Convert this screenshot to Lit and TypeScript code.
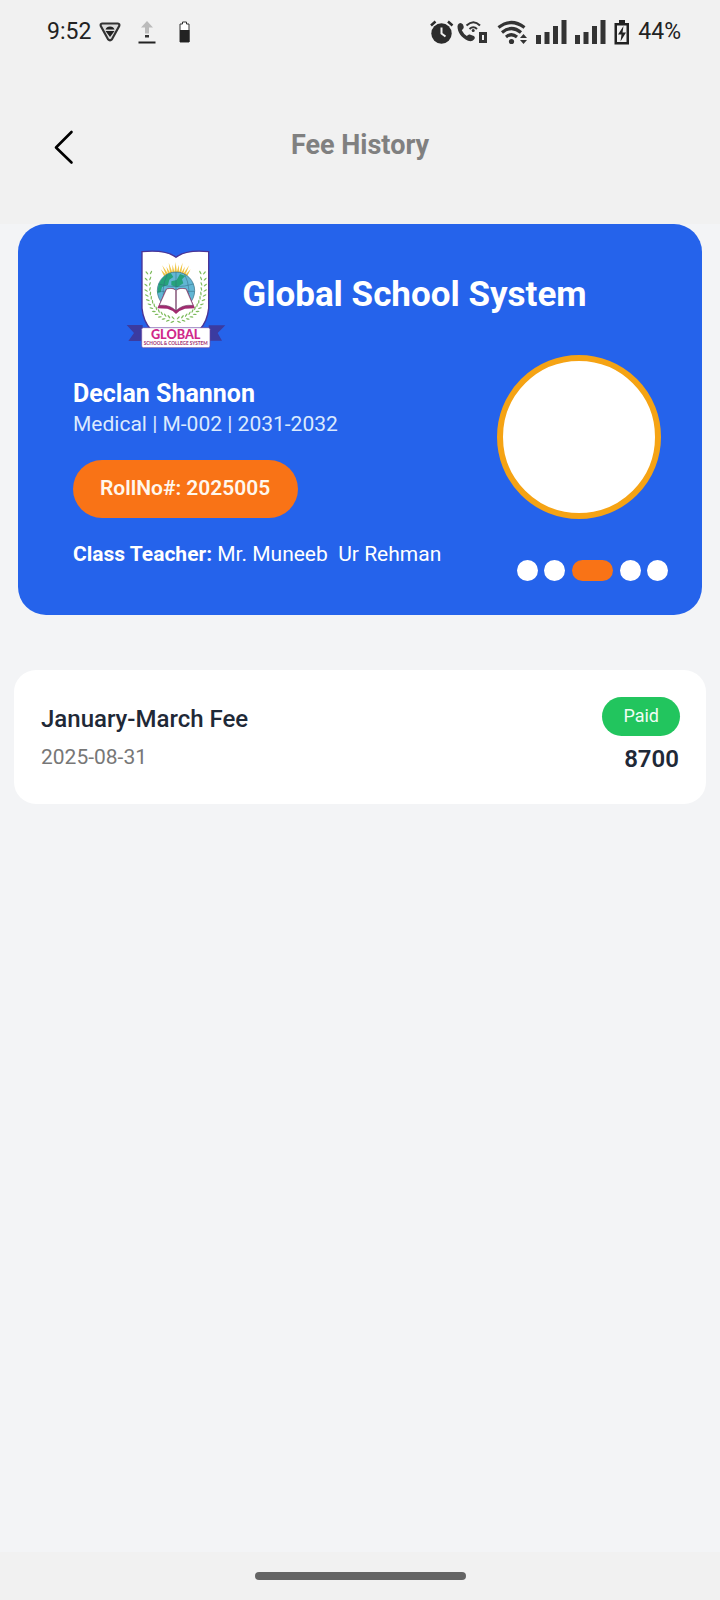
import { LitElement, html, svg, css } from "lit";
import { customElement, property, state } from "lit/decorators.js";
import { classMap } from "lit/directives/class-map.js";

interface Fee {
    title: string;
    date: string;
    amount: number;
    status: string;
}

@customElement("status-bar")
class StatusBar extends LitElement {
    @property() time = "";
    @property() battery = "";

    static styles = css`
        :host {
            display: flex;
            justify-content: space-between;
            align-items: center;
            height: 64px;
            padding: 0 39px 0 47px;
            color: #222;
            font-size: 23px;
            line-height: 28px;
        }

        .side {
            display: flex;
            align-items: center;
            gap: 8px;
        }

        .left {
            gap: 17px;
        }

        .clock {
            display: flex;
            align-items: center;
            gap: 8px;
        }

        .pair {
            display: flex;
            gap: 3px;
        }

        svg {
            display: block;
        }
    `;

    _signal() {
        return html`
            <svg width="31" height="24" viewBox="0 0 31 24" fill="#333">
                <rect x="0" y="15" width="5" height="9" />
                <rect x="8.5" y="12" width="5" height="12" />
                <rect x="17" y="6" width="5" height="18" />
                <rect x="25.5" y="0" width="5" height="24" />
            </svg>`;
    }

    render() {
        return html`
            <div class="side left">
                <div class="clock">
                    <span>${this.time}</span>
                    <svg width="22" height="20" viewBox="0 0 22 20">
                        <path d="M3.2 1.5h15.6q2.2.4 1.4 2.6L13 17.2q-2 2.2-4 0L1.8 4.1Q1 1.9 3.2 1.5z" fill="#ddd" stroke="#333" stroke-width="2.2" />
                        <path d="M6.5 7.5q1-3 4.5-3t4.500 3zM6.5 9h9L11 15z" fill="#222" />
                    </svg>
                </div>
                <svg width="18" height="23" viewBox="0 0 18 23">
                    <path d="M9 0l6 6.500h-4v6H7v-6H3z" fill="#bbb" />
                    <rect x="7" y="14" width="4" height="2.5" fill="#333" />
                    <rect x="0.5" y="20.5" width="17" height="2" fill="#222" />
                </svg>
                <svg width="24" height="22" viewBox="-6 0 24 22">
                    <path d="M1 21V3h2.5V1h4v2H10v18z" fill="#fff" stroke="#333" />
                    <rect x="1" y="9" width="9.5" height="12" fill="#222" />
                </svg>
            </div>
            <div class="side">
                <div class="pair">
                    <svg width="24" height="24" viewBox="0 0 24 24">
                        <circle cx="11.5" cy="13.5" r="10.2" fill="#2c2c2c" />
                        <path d="M1 5.500L5.500 1.500M18 1.500L22.500 5.500" stroke="#2c2c2c" stroke-width="2.5" />
                        <path d="M11.5 7.500v6l4 3" fill="none" stroke="#f1f1f1" stroke-width="2" />
                    </svg>
                    <svg width="32" height="24" viewBox="0 0 32 24">
                        <path d="M2 3.500q2-1.500 4 1l.8 2.500q.2 1.500-2 3.200 2 4 5 5.800 1.600-2 3-1.500l4 1.500q2 1.500.2 3.500-2 2.500-6 1.200C4.500 18 .5 12 .5 6.500q0-2 1.500-3z" fill="#333" />
                        <path d="M9.5 5.500q7-6.500 13.500 0M12.500 9q3.800-3.600 7.500 0" fill="none" stroke="#333" stroke-width="2" />
                        <circle cx="16.2" cy="10.5" r="1.5" fill="#333" />
                        <path d="M23.500 13.500h5v8h-5z" fill="none" stroke="#333" stroke-width="3" />
                    </svg>
                </div>
                <svg width="31" height="25" viewBox="0 0 31 25">
                    <g fill="none" stroke="#333" stroke-width="3.2">
                        <path d="M1.5 7.500q12.500-10 26 0" />
                        <path d="M5 12.500q9.500-8 19 0" />
                        <path d="M9 17q5.500-4.500 11 0" />
                    </g>
                    <circle cx="14.5" cy="21.5" r="2.6" fill="#333" />
                    <path d="M23 18l3.500-4 3.500 4zM23 20h7l-3.500 4z" fill="#333" />
                </svg>
                ${this._signal()}
                ${this._signal()}
                <svg width="16" height="25" viewBox="0 0 16 25">
                    <path d="M5 0h6v3h4v21.500H0.500V3H5z" fill="#222" />
                    <path d="M3 5.500h9.500V22H3z" fill="#f1f1f1" />
                    <path d="M9.500 6L4 14.500h3.500L6.500 21.500l5.500-9H8.500z" fill="#222" />
                </svg>
                <span>${this.battery}</span>
            </div>
        `;
    }
}

@customElement("school-logo")
class SchoolLogo extends LitElement {
    static styles = css`
        :host {
            display: block;
        }

        svg {
            display: block;
        }

        text {
            font-family: Lato, "Open Sans", sans-serif;
            font-weight: 900;
        }
    `;

    // leaves sit in pairs on a quadratic curve from the tip down to the stem
    _laurel() {
        const leaves = [];
        for (let i = 0; i <= 13; i++) {
            const t = i / 13;
            const x = (1 - t) ** 2 * 99 + 2 * (1 - t) * t * 82 + t ** 2 * 172;
            const y = (1 - t) ** 2 * 100 + 2 * (1 - t) * t * 222 + t ** 2 * 240;
            const angle = -95 + t * -75;
            leaves.push(svg`
                <g transform="translate(${x} ${y}) rotate(${angle})">
                    <ellipse cx="5" cy="-4" rx="6" ry="2" transform="rotate(-35)" />
                    <ellipse cx="5" cy="4" rx="6" ry="2" transform="rotate(35)" />
                </g>`);
        }
        return leaves;
    }

    _rays() {
        return Array(11).fill(0).map((_, i) => {
            const length = i % 2 ? 86 : 78;
            return svg`<path d="M-4 -52L0 ${-length}L4 -52z" transform="translate(179 152) rotate(${(i - 5) * 7})" />`;
        });
    }

    render() {
        return html`
            <svg width="100" height="100" viewBox="30 30 300 300" role="img" aria-label="Global School logo">
                <path d="M32 255h48v48H37l17-24zM328 256h-50v46h40l-13-23z" fill="#3b3ba0" />
                <path d="M78 35Q150 28 180 52 210 28 278 35V205Q274 245 250 270H106Q82 245 78 205z" fill="#fff" stroke="#4a3494" stroke-width="4" />
                <g fill="#f0c443">${this._rays()}</g>
                <circle cx="180" cy="152" r="56" fill="#62b6d4" stroke="#31687f" stroke-width="2" />
                <path d="M128 133q12-28 36-34l8 12-12 8-4 16-18 6-4 16-10 2zM166 124l16-4 10-18 16 6-10 10 4 12-18 12-18-6z" fill="#26a27b" />
                <g fill="none" stroke="#31687f" stroke-width="1.5">
                    <path d="M128 132q52 16 104 0M125 154h110M180 96v70M154 103q-22 44-6 96M206 103q22 44 6 96" />
                </g>
                <path d="M124 205l26-58q20-8 30 4 12-12 32-4l25 58-30 1q-16 4-27 16-10-12-26-16z" fill="#a12b70" />
                <path d="M130 196l22-49q18-5 27 4v60q-18-18-49-15zM231 196l-21-49q-18-5-29 4v60q18-18 50-15z" fill="#fff" stroke="#60405f" stroke-width="1.5" />
                <g fill="#7dbb5c">${this._laurel()}</g>
                <g fill="#7dbb5c" transform="matrix(-1 0 0 1 358 0)">${this._laurel()}</g>
                <rect x="77" y="263" width="205" height="60" rx="5" fill="#fff" stroke="#6a4aa5" stroke-width="2" />
                <text x="179" y="298" text-anchor="middle" font-size="38" fill="#d0288a">GLOBAL</text>
                <text x="179" y="315" text-anchor="middle" font-size="14" fill="#a83c78">SCHOOL &amp; COLLEGE SYSTEM</text>
            </svg>
        `;
    }
}

@customElement("student-card")
class StudentCard extends LitElement {
    @state() current = 2;

    static styles = css`
        :host {
            display: block;
            padding: 26px 34px 34px 55px;
            border-radius: 28px;
            background: #2563eb;
            color: #fff;
        }

        .school {
            display: flex;
            justify-content: center;
            align-items: center;
            gap: 16px;
            padding-right: 28px;
        }

        h2 {
            margin: 0 0 10px;
            font-size: 35px;
            line-height: 44px;
            font-weight: 700;
        }

        .body {
            display: flex;
            justify-content: space-between;
        }

        .info {
            display: flex;
            flex-direction: column;
            align-items: flex-start;
            padding-top: 29px;
        }

        h3 {
            margin: 0;
            font-size: 25px;
            line-height: 30px;
            font-weight: 700;
        }

        p {
            margin: 0;
            font-size: 21px;
            line-height: 30px;
        }

        .meta {
            color: #dbeafe;
        }

        .roll {
            margin: 21px 0;
            padding: 13px 28px 15px 27px;
            border-radius: 29px;
            background: #f97316;
            color: #fff7ed;
            font-size: 21px;
            line-height: 30px;
            font-weight: 600;
        }

        .teacher {
            white-space: pre;
        }

        .side {
            display: flex;
            flex-direction: column;
            align-items: flex-end;
            gap: 41px;
            padding-top: 5px;
        }

        .photo {
            box-sizing: border-box;
            width: 164px;
            height: 164px;
            margin-right: 7px;
            border: 6px solid #f5a314;
            border-radius: 50%;
            background: #fff;
        }

        .dots {
            display: flex;
            gap: 6px;
        }

        .dot {
            width: 21px;
            height: 21px;
            padding: 0;
            border: 0;
            border-radius: 11px;
            background: #fff;
            cursor: pointer;
        }

        .dot.active {
            width: 41px;
            margin: 0 1px;
            background: #f97316;
        }
    `;

    render() {
        return html`
            <div class="school">
                <school-logo></school-logo>
                <h2>Global School System</h2>
            </div>
            <div class="body">
                <div class="info">
                    <h3>Declan Shannon</h3>
                    <p class="meta">Medical | M-002 | 2031-2032</p>
                    <div class="roll">RollNo#: 2025005</div>
                    <p class="teacher"><b>Class Teacher:</b> Mr. Muneeb  Ur Rehman</p>
                </div>
                <div class="side">
                    <div class="photo"></div>
                    <div class="dots">
                        ${Array(5).fill(0).map((_, index) => html`
                            <button
                                class=${classMap({ dot: true, active: index === this.current })}
                                aria-label="Student ${index + 1}"
                                @click=${() => this.current = index}
                            ></button>`)}
                    </div>
                </div>
            </div>
        `;
    }
}

@customElement("fee-item")
class FeeItem extends LitElement {
    @property({ attribute: false }) fee!: Fee;

    static styles = css`
        :host {
            display: flex;
            justify-content: space-between;
            padding: 27px 26px 30px 27px;
            border-radius: 22px;
            background: #fff;
            color: #1f2937;
        }

        h3, p {
            margin: 0;
        }

        .text {
            padding-top: 7px;
        }

        h3 {
            font-size: 24px;
            line-height: 30px;
            font-weight: 500;
        }

        .date {
            padding-top: 8px;
            color: #777;
            font-size: 21px;
            line-height: 30px;
        }

        .result {
            display: flex;
            flex-direction: column;
            align-items: flex-end;
            gap: 8px;
        }

        .status {
            padding: 4px 21px 5px;
            border-radius: 20px;
            background: #22c55e;
            color: #f0fdf4;
            font-size: 18px;
            line-height: 30px;
        }

        .amount {
            padding-right: 1px;
            font-size: 24px;
            line-height: 30px;
            font-weight: 600;
        }
    `;

    render() {
        return html`
            <div class="text">
                <h3>${this.fee.title}</h3>
                <p class="date">${this.fee.date}</p>
            </div>
            <div class="result">
                <span class="status">${this.fee.status}</span>
                <span class="amount">${this.fee.amount}</span>
            </div>
        `;
    }
}

@customElement("app-root")
class AppRoot extends LitElement {
    @state() fees: Fee[] = [
        { title: "January-March Fee", date: "2025-08-31", amount: 8700, status: "Paid" }
    ];

    static styles = css`
        :host {
            display: flex;
            flex-direction: column;
            min-height: 100vh;
            background: #f3f4f6;
            font-family: Roboto, sans-serif;
        }

        .top, footer {
            background: #f1f1f1;
        }

        header {
            display: grid;
            grid-template-columns: 80px 1fr 80px;
            align-items: center;
            padding: 61px 24px 55px;
        }

        h1 {
            margin: 0;
            padding-bottom: 4px;
            color: #808080;
            font-size: 27px;
            line-height: 40px;
            font-weight: 700;
            text-align: center;
        }

        .back {
            justify-self: center;
            padding: 4px 12px;
            border: 0;
            background: none;
            cursor: pointer;
        }

        .back svg {
            display: block;
        }

        main {
            flex: 1;
        }

        student-card {
            margin: 0 18px;
        }

        .fees {
            display: flex;
            flex-direction: column;
            gap: 16px;
            padding: 55px 14px;
        }

        footer {
            display: flex;
            justify-content: center;
            padding: 20px 0;
        }

        .handle {
            width: 211px;
            height: 8px;
            border-radius: 4px;
            background: #646464;
        }
    `;

    render() {
        return html`
            <div class="top">
                <status-bar time="9:52" battery="44%"></status-bar>
                <header>
                    <button class="back" aria-label="Back" @click=${() => history.back()}>
                        <svg width="20" height="36" viewBox="0 0 20 36" fill="none">
                            <path d="M17.5 3L2 18.500 17.500 33.500" stroke="#000" stroke-width="2.6" stroke-linecap="round" stroke-linejoin="round" />
                        </svg>
                    </button>
                    <h1>Fee History</h1>
                </header>
            </div>
            <main>
                <student-card></student-card>
                <section class="fees">
                    ${this.fees.map((fee) => html`<fee-item .fee=${fee}></fee-item>`)}
                </section>
            </main>
            <footer><div class="handle"></div></footer>
        `;
    }
}
